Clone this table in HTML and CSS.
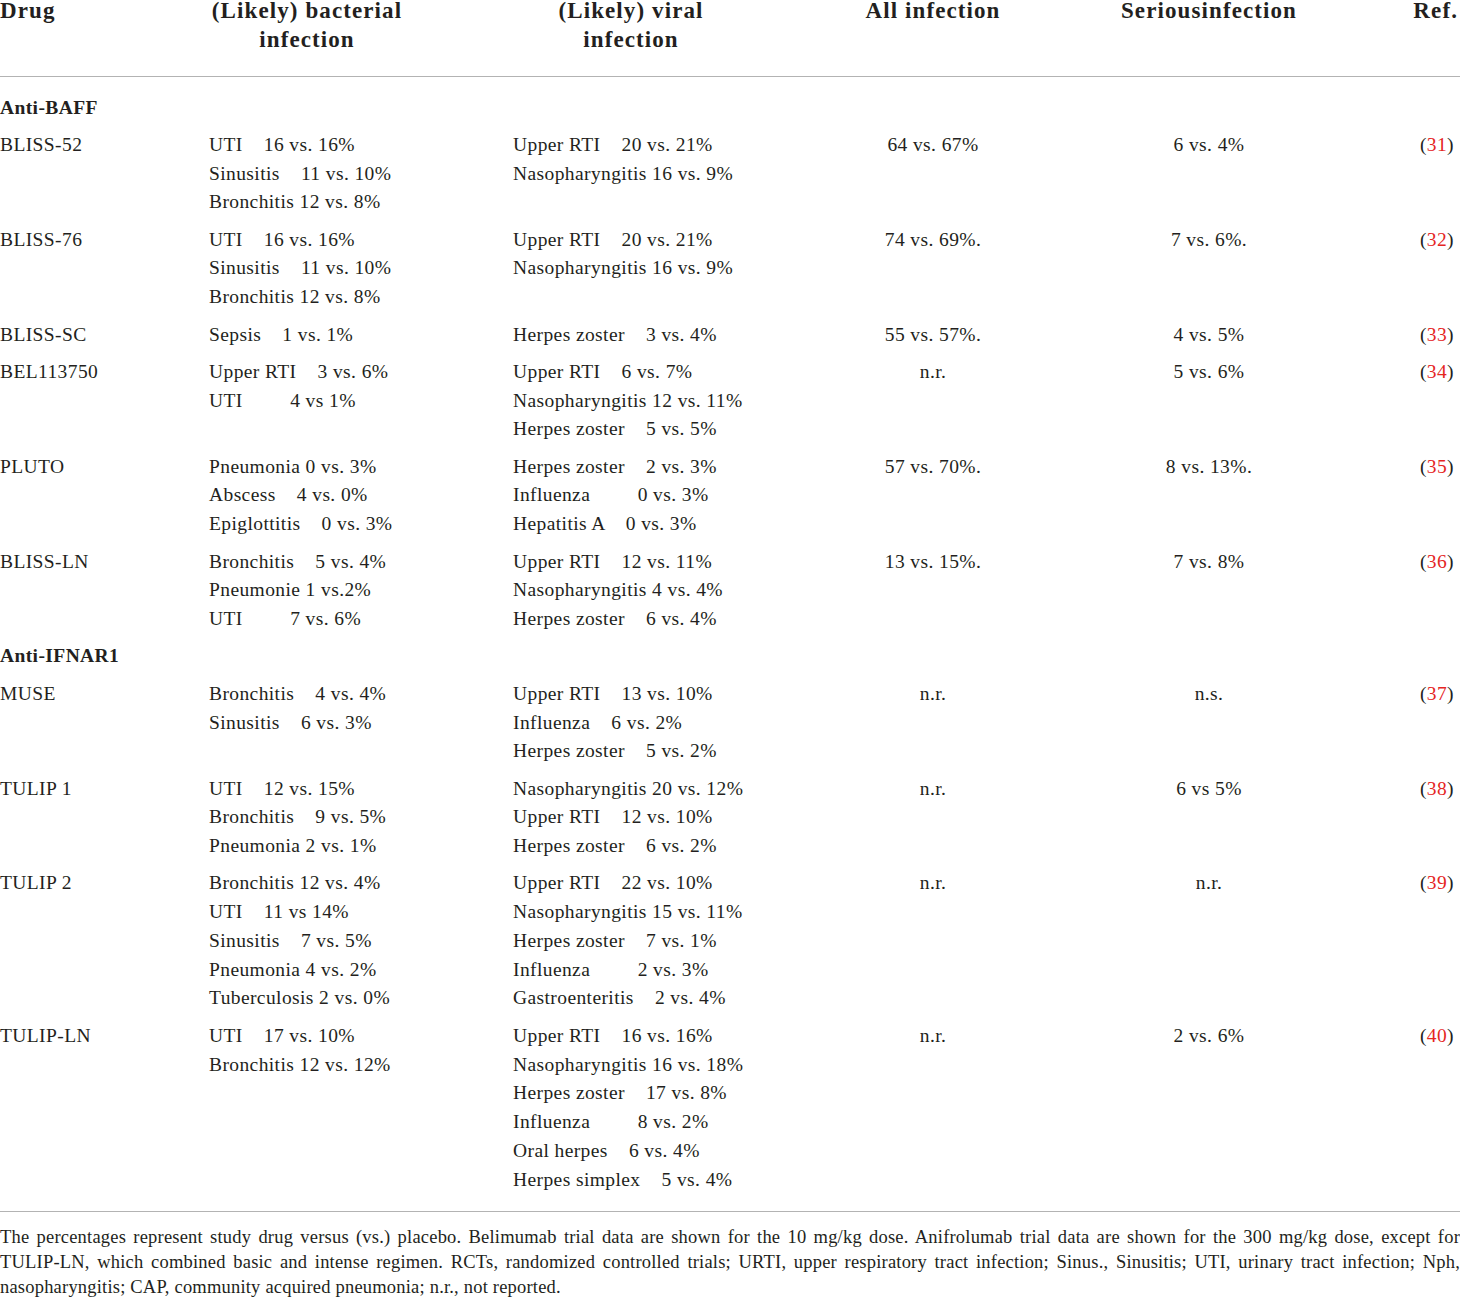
FILE: index.html
```html
<!DOCTYPE html>
<html>
<head>
<meta charset="utf-8">
<link rel="stylesheet" href="styles.css">
</head>
<body>
<div class="page">
<table class="tbl">
  <colgroup>
    <col class="w-drug"><col class="w-bact"><col class="w-viral"><col class="w-all"><col class="w-ser"><col class="w-ref">
  </colgroup>
  <thead>
    <tr>
      <th class="c-drug">Drug</th>
      <th class="c-bact">(Likely) bacterial<br>infection</th>
      <th class="c-viral">(Likely) viral<br>infection</th>
      <th class="c-all">All infection</th>
      <th class="c-ser">Seriousinfection</th>
      <th class="c-ref">Ref.</th>
    </tr>
  </thead>
  <tbody>
    <tr class="group first">
      <td colspan="6">Anti-BAFF</td>
    </tr>
    <tr>
      <td class="c-drug">BLISS-52</td>
      <td class="c-bact"><div class="ln">UTI    16 vs. 16%</div><div class="ln">Sinusitis    11 vs. 10%</div><div class="ln">Bronchitis 12 vs. 8%</div></td>
      <td class="c-viral"><div class="ln">Upper RTI    20 vs. 21%</div><div class="ln">Nasopharyngitis 16 vs. 9%</div></td>
      <td class="c-all">64 vs. 67%</td>
      <td class="c-ser">6 vs. 4%</td>
      <td class="c-ref">(<span class="ref">31</span>)</td>
    </tr>
    <tr>
      <td class="c-drug">BLISS-76</td>
      <td class="c-bact"><div class="ln">UTI    16 vs. 16%</div><div class="ln">Sinusitis    11 vs. 10%</div><div class="ln">Bronchitis 12 vs. 8%</div></td>
      <td class="c-viral"><div class="ln">Upper RTI    20 vs. 21%</div><div class="ln">Nasopharyngitis 16 vs. 9%</div></td>
      <td class="c-all">74 vs. 69%.</td>
      <td class="c-ser">7 vs. 6%.</td>
      <td class="c-ref">(<span class="ref">32</span>)</td>
    </tr>
    <tr>
      <td class="c-drug">BLISS-SC</td>
      <td class="c-bact"><div class="ln">Sepsis    1 vs. 1%</div></td>
      <td class="c-viral"><div class="ln">Herpes zoster    3 vs. 4%</div></td>
      <td class="c-all">55 vs. 57%.</td>
      <td class="c-ser">4 vs. 5%</td>
      <td class="c-ref">(<span class="ref">33</span>)</td>
    </tr>
    <tr>
      <td class="c-drug">BEL113750</td>
      <td class="c-bact"><div class="ln">Upper RTI    3 vs. 6%</div><div class="ln">UTI         4 vs 1%</div></td>
      <td class="c-viral"><div class="ln">Upper RTI    6 vs. 7%</div><div class="ln">Nasopharyngitis 12 vs. 11%</div><div class="ln">Herpes zoster    5 vs. 5%</div></td>
      <td class="c-all">n.r.</td>
      <td class="c-ser">5 vs. 6%</td>
      <td class="c-ref">(<span class="ref">34</span>)</td>
    </tr>
    <tr>
      <td class="c-drug">PLUTO</td>
      <td class="c-bact"><div class="ln">Pneumonia 0 vs. 3%</div><div class="ln">Abscess    4 vs. 0%</div><div class="ln">Epiglottitis    0 vs. 3%</div></td>
      <td class="c-viral"><div class="ln">Herpes zoster    2 vs. 3%</div><div class="ln">Influenza         0 vs. 3%</div><div class="ln">Hepatitis A    0 vs. 3%</div></td>
      <td class="c-all">57 vs. 70%.</td>
      <td class="c-ser">8 vs. 13%.</td>
      <td class="c-ref">(<span class="ref">35</span>)</td>
    </tr>
    <tr>
      <td class="c-drug">BLISS-LN</td>
      <td class="c-bact"><div class="ln">Bronchitis    5 vs. 4%</div><div class="ln">Pneumonie 1 vs.2%</div><div class="ln">UTI         7 vs. 6%</div></td>
      <td class="c-viral"><div class="ln">Upper RTI    12 vs. 11%</div><div class="ln">Nasopharyngitis 4 vs. 4%</div><div class="ln">Herpes zoster    6 vs. 4%</div></td>
      <td class="c-all">13 vs. 15%.</td>
      <td class="c-ser">7 vs. 8%</td>
      <td class="c-ref">(<span class="ref">36</span>)</td>
    </tr>
    <tr class="group">
      <td colspan="6">Anti-IFNAR1</td>
    </tr>
    <tr>
      <td class="c-drug">MUSE</td>
      <td class="c-bact"><div class="ln">Bronchitis    4 vs. 4%</div><div class="ln">Sinusitis    6 vs. 3%</div></td>
      <td class="c-viral"><div class="ln">Upper RTI    13 vs. 10%</div><div class="ln">Influenza    6 vs. 2%</div><div class="ln">Herpes zoster    5 vs. 2%</div></td>
      <td class="c-all">n.r.</td>
      <td class="c-ser">n.s.</td>
      <td class="c-ref">(<span class="ref">37</span>)</td>
    </tr>
    <tr>
      <td class="c-drug">TULIP 1</td>
      <td class="c-bact"><div class="ln">UTI    12 vs. 15%</div><div class="ln">Bronchitis    9 vs. 5%</div><div class="ln">Pneumonia 2 vs. 1%</div></td>
      <td class="c-viral"><div class="ln">Nasopharyngitis 20 vs. 12%</div><div class="ln">Upper RTI    12 vs. 10%</div><div class="ln">Herpes zoster    6 vs. 2%</div></td>
      <td class="c-all">n.r.</td>
      <td class="c-ser">6 vs 5%</td>
      <td class="c-ref">(<span class="ref">38</span>)</td>
    </tr>
    <tr>
      <td class="c-drug">TULIP 2</td>
      <td class="c-bact"><div class="ln">Bronchitis 12 vs. 4%</div><div class="ln">UTI    11 vs 14%</div><div class="ln">Sinusitis    7 vs. 5%</div><div class="ln">Pneumonia 4 vs. 2%</div><div class="ln">Tuberculosis 2 vs. 0%</div></td>
      <td class="c-viral"><div class="ln">Upper RTI    22 vs. 10%</div><div class="ln">Nasopharyngitis 15 vs. 11%</div><div class="ln">Herpes zoster    7 vs. 1%</div><div class="ln">Influenza         2 vs. 3%</div><div class="ln">Gastroenteritis    2 vs. 4%</div></td>
      <td class="c-all">n.r.</td>
      <td class="c-ser">n.r.</td>
      <td class="c-ref">(<span class="ref">39</span>)</td>
    </tr>
    <tr class="last">
      <td class="c-drug">TULIP-LN</td>
      <td class="c-bact"><div class="ln">UTI    17 vs. 10%</div><div class="ln">Bronchitis 12 vs. 12%</div></td>
      <td class="c-viral"><div class="ln">Upper RTI    16 vs. 16%</div><div class="ln">Nasopharyngitis 16 vs. 18%</div><div class="ln">Herpes zoster    17 vs. 8%</div><div class="ln">Influenza         8 vs. 2%</div><div class="ln">Oral herpes    6 vs. 4%</div><div class="ln">Herpes simplex    5 vs. 4%</div></td>
      <td class="c-all">n.r.</td>
      <td class="c-ser">2 vs. 6%</td>
      <td class="c-ref">(<span class="ref">40</span>)</td>
    </tr>
  </tbody>
</table>
<div class="note">
  <span class="note-line">The percentages represent study drug versus (vs.) placebo. Belimumab trial data are shown for the 10 mg/kg dose. Anifrolumab trial data are shown for the 300 mg/kg dose, except for</span>
  <span class="note-line">TULIP-LN, which combined basic and intense regimen. RCTs, randomized controlled trials; URTI, upper respiratory tract infection; Sinus., Sinusitis; UTI, urinary tract infection; Nph,</span>
  <span class="note-line note-last">nasopharyngitis; CAP, community acquired pneumonia; n.r., not reported.</span>
</div>
</div>
</body>
</html>
```

FILE: styles.css
```css
html, body {
  margin: 0;
  padding: 0;
  background: #ffffff;
}

body {
  font-family: "Liberation Serif", "Times New Roman", serif;
  color: #231f20;
  overflow: hidden;
}

.page {
  width: 1460px;
  margin-top: -4px;
}

.tbl {
  width: 1460px;
  border-collapse: collapse;
  table-layout: fixed;
}

.w-drug { width: 209px; }
.w-bact { width: 304px; }
.w-viral { width: 236px; }
.w-all { width: 368px; }
.w-ser { width: 184px; }
.w-ref { width: 159px; }

.tbl th {
  font-size: 23px;
  font-weight: bold;
  letter-spacing: 1.1px;
  line-height: 29px;
  padding: 0 0 22px 0;
  vertical-align: top;
  text-align: center;
  white-space: nowrap;
  border-bottom: 1px solid #b3b3b3;
}

.tbl th.c-drug { text-align: left; }
.tbl th.c-bact { padding-right: 108px; }
.tbl th.c-ref { text-align: right; padding-right: 2px; }

.tbl td {
  font-size: 19.5px;
  letter-spacing: 0.4px;
  line-height: 28.75px;
  padding: 4.3px 0;
  vertical-align: top;
}

.tbl td.c-drug { text-align: left; }
.tbl td.c-bact { text-align: left; }
.tbl td.c-viral { text-align: left; }
.tbl td.c-all { text-align: center; }
.tbl td.c-ser { text-align: center; }
.tbl td.c-ref { text-align: right; padding-right: 6px; }

.ln {
  white-space: pre;
}

.group td {
  font-weight: bold;
  text-align: left;
}

.group.first td {
  padding-top: 16.5px;
}

.last td {
  padding-bottom: 17px;
  border-bottom: 1px solid #b3b3b3;
}

.ref {
  color: #e5261f;
}

.note {
  margin-top: 13px;
  font-size: 18.5px;
  letter-spacing: 0.2px;
  line-height: 25px;
}

.note-line {
  display: block;
  text-align: justify;
  text-align-last: justify;
}

.note-line.note-last {
  text-align-last: left;
}
```
